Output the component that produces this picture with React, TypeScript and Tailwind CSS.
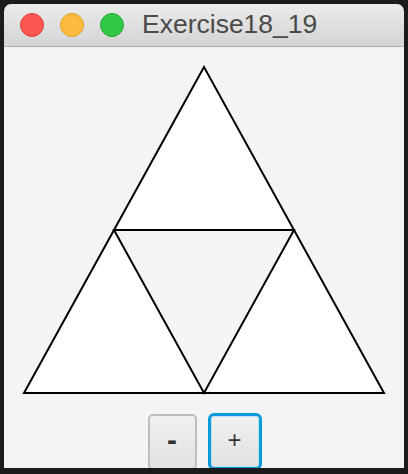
import React from "react";

const Light = ({ color, border }: { color: string; border: string }) => (
  <div
    className="w-[24px] h-[24px] rounded-full border"
    style={{ backgroundColor: color, borderColor: border }}
  />
);

export default function App() {
  return (
    <div className="w-[408px] h-[474px] bg-[#1b1b1b] pt-[4px] pl-[4px] overflow-hidden">
      <div className="w-[400px] h-[464px] rounded-t-[7px] overflow-hidden flex flex-col">
        <div className="h-[43px] shrink-0 bg-gradient-to-b from-[#ebebeb] to-[#d4d4d4] border-b border-[#adadad] flex items-center pl-[16px]">
          <div className="flex gap-[16px]">
            <Light color="#fc5753" border="#de3f3b" />
            <Light color="#fdbc40" border="#de9d26" />
            <Light color="#33c748" border="#27aa35" />
          </div>
          <span className="ml-[18px] text-[26.5px] leading-none text-[#4a4a4a] font-['Liberation_Sans',Arial,sans-serif] -mt-[2px]">
            Exercise18_19
          </span>
        </div>
        <div className="flex-1 bg-[#f4f4f4] flex flex-col items-center">
          <svg width="400" height="360" viewBox="0 0 400 360" className="shrink-0">
            <polygon
              points="200,20 20,346 380,346"
              fill="#ffffff"
              stroke="#000"
              strokeWidth="2"
              strokeLinejoin="miter"
            />
            <polygon
              points="110,183 290,183 200,346"
              fill="#f4f4f4"
              stroke="#000"
              strokeWidth="2"
            />
          </svg>
          <div className="flex gap-[11px] mt-[7px] pl-[1px]">
            <button className="w-[49px] h-[56px] rounded-[5px] border-2 border-[#bdbdbd] bg-gradient-to-b from-[#f0f0f0] to-[#e2e2e2] text-[30px] font-bold text-[#333] font-['Liberation_Sans',Arial,sans-serif] flex items-center justify-center pb-[6px]">
              -
            </button>
            <button className="w-[54px] h-[57px] -mt-[1px] rounded-[6px] border-[3px] border-[#0b9ad9] bg-gradient-to-b from-[#f0f0f0] to-[#e2e2e2] text-[24px] text-[#333] font-['Liberation_Sans',Arial,sans-serif] flex items-center justify-center pb-[4px] shadow-[inset_0_0_0_1px_#bfe3f3]">
              +
            </button>
          </div>
        </div>
      </div>
    </div>
  );
}
